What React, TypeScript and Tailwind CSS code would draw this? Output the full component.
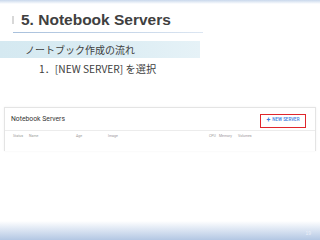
export default function App() {
  const cols = [
    { label: "Status", w: "w-[16px]" },
    { label: "Name", w: "w-[47px]" },
    { label: "Age", w: "w-[32px]" },
    { label: "Image", w: "w-[101px]" },
    { label: "CPU", w: "w-[10px]" },
    { label: "Memory", w: "w-[19px]" },
    { label: "Volumes", w: "w-[20px]" },
  ]

  return (
    <div className="w-[320px] h-[240px] bg-white flex flex-col overflow-hidden" style={{ fontFamily: "'Liberation Sans', 'Noto Sans CJK JP', sans-serif" }}>
      {/* top strip */}
      <div className="h-[4px] bg-gradient-to-b from-[#c9d8ec] to-white" />

      {/* title */}
      <div className="flex items-center mt-[6px] pl-[12px]">
        <div className="w-[2px] h-[8px] bg-[#d8d8d8]" />
        <h1 className="ml-[7px] text-[15.5px] leading-[20px] font-bold text-[#404040]">
          5. Notebook Servers
        </h1>
      </div>
      <div className="ml-[13px] mt-[2px] w-[190px] h-[1px] bg-gradient-to-r from-[#a8c0dc] to-[#dce6f2]" />

      {/* section band */}
      <div className="mt-[8px] h-[17px] w-[200px] bg-gradient-to-r from-[#d5e9f1] via-[#daecf3] to-[#e6f2f7] flex items-center pl-[25px]">
        <span className="text-[10px] leading-[17px] text-[#404040]" style={{ fontFamily: "'Noto Sans CJK JP', sans-serif" }}>
          ノートブック作成の流れ
        </span>
      </div>
      <div className="mt-[4px] pl-[39px] text-[10.2px] leading-[13px] text-[#404040]" style={{ fontFamily: "'Noto Sans CJK JP', sans-serif" }}>
        1．[NEW SERVER] を選択
      </div>

      {/* screenshot card */}
      <div className="mt-[32px] mx-[4px] h-[44px] border border-b-0 border-[#e4e4e4] shadow-[0_0_2px_rgba(0,0,0,0.06)] flex flex-col" style={{ fontFamily: "Roboto, sans-serif" }}>
        <div className="h-[23px] flex items-center justify-between pl-[6px] pr-[9px] border-b border-[#ececec]">
          <span className="text-[6.8px] text-[#333] mt-[1px]">Notebook Servers</span>
          <div className="w-[46px] h-[14px] mt-[3px] border-[1.5px] border-[#e0262c] flex items-center justify-center gap-[2px]">
            <span className="text-[7px] leading-none text-[#3b7de0] font-bold">+</span>
            <span className="text-[4.5px] leading-none text-[#3b7de0] font-medium">NEW SERVER</span>
          </div>
        </div>
        <div className="flex items-center h-[12px] pl-[8px] text-[3.5px] text-[#999]">
          {cols.map((c) => (
            <span key={c.label} className={`${c.w} shrink-0`}>{c.label}</span>
          ))}
        </div>
      </div>

      <div className="flex-1" />

      {/* bottom gradient */}
      <div className="h-[19px] bg-gradient-to-b from-white to-[#b3c7e3] flex items-end justify-end pr-[9px] pb-[3px]">
        <span className="text-[5px] text-[#e8eef8]">19</span>
      </div>
    </div>
  )
}
